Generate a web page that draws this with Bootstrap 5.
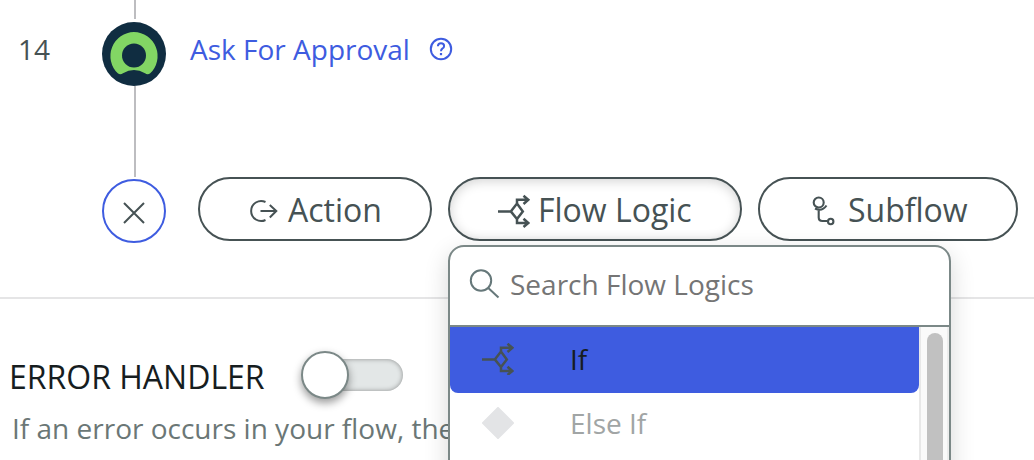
<!DOCTYPE html>
<html lang="en">
<head>
<meta charset="utf-8">
<meta name="viewport" content="width=device-width, initial-scale=1">
<title>Flow Designer</title>
<link href="https://cdn.jsdelivr.net/npm/bootstrap@5.3.0/dist/css/bootstrap.min.css" rel="stylesheet">
<style>
body{font-family:"Open Sans",sans-serif;font-size:28px;line-height:38px;color:#465254;background:#fff}
.designer{width:1034px;height:460px}
.rail{width:64px;margin-left:52px}
.rail i{width:2px;background:#bdbdc0;margin-left:1px}
.line-top{height:19px;margin-bottom:3px}
.line-mid{height:91px}
.cancel{width:64px;height:64px;border:2px solid #3e5ce0;background:#fff;margin-top:2px}
.cancel svg{margin-top:3px}
.step-no{width:50px;padding-left:18px;padding-top:30px}
.main-col{margin-left:24px}
.step-title{margin-top:30px;height:38px;color:#3e5ce0}
.step-title a{color:inherit}
.step-title svg{margin:7px 0 0 19px}
.choices{margin-top:109px;gap:16px;margin-left:8px}
.btn-choice{height:64px;border:2px solid #465254;border-radius:32px;font-size:32px;line-height:44px;color:#465254;padding:2px 0 0 48px;background:#fff;display:flex;align-items:center}
.btn-choice.active{background:#fff!important;color:#465254!important;border-color:#465254!important;box-shadow:inset 0 2px 12px rgba(0,0,0,.18)}
.choice-action{width:234px}
.choice-action svg{margin-top:2px}
.choice-action span{margin-left:10px}
.choice-logic{width:294px;padding-left:47px}
.choice-logic svg{margin-top:1px}
.choice-logic span{margin-left:7px}
.choice-subflow{width:260px;padding-left:52px}
.choice-subflow svg{margin-top:2px}
.choice-subflow span{margin-left:12px}
.flow-top{height:297px}
.handler{border-top:2px solid #e5e5e6;height:163px}
.handler h2{font-size:32px;line-height:44px;font-weight:400;color:#161d1f;margin:6px 0 0}
.handler-head{padding:50px 0 0 9px;height:100px}
.toggle{width:102px;height:32px;margin:10px 0 0 36px}
.toggle-track{width:78px;height:32px;border-radius:16px;background:#e3e7e7;box-shadow:inset 0 0 5px rgba(0,0,0,.38)}
.toggle-knob{left:0;top:-8px;width:48px;height:48px;background:#fff;border:2px solid #7b8887;box-shadow:0 4px 8px rgba(0,0,0,.4)}
.desc{color:#6b7776;padding-left:12px;margin-top:10px}
.picker{left:448px;top:245px;width:503px;height:260px;border:2px solid #7b8887;border-radius:16px;box-shadow:0 8px 24px rgba(0,0,0,.16);z-index:5}
.picker-search{height:80px;border-bottom:2px solid #7b8887;color:#757575;padding:0 0 4px 18px}
.picker-search span{margin-left:10px}
.picker-list{width:469px}
.picker-item{height:66px;padding:0 0 6px 32px;color:#a1a5a5}
.picker-item span{margin-left:56px}
.picker-item.selected{background:#3e5ce0;color:#161d1f;border-radius:0 0 8px 8px;padding-bottom:2px}
.scroller{width:30px;background:#fafafa;border-left:2px solid #e8e8e8;border-right:2px solid #ededed;padding:6px 0 0 6px}
.scroller div{width:16px;height:170px;background:#c1c1c1;border-radius:8px}
svg{display:block;flex:none}
</style>
</head>
<body>
<svg width="0" height="0" class="position-absolute" aria-hidden="true">
  <symbol id="branch" viewBox="0 0 34 34"><g fill="none" stroke="#465254" stroke-width="2.500"><path d="M1 17.400H14M13.800 17.400 20 9.500 25.800 17.400 20 25ZM20 10.500V5.800H31M20 24V29H31M26.500 1.700 31.300 5.800 26.500 10M26.500 24.800 31.300 29 26.500 33"/></g></symbol>
</svg>
<div class="designer position-relative overflow-hidden">
  <div class="flow-top d-flex">
    <div class="step-no">14</div>
    <div class="rail d-flex flex-column align-items-center">
      <i class="line-top"></i>
      <svg width="64" height="64" viewBox="0 0 64 64"><circle cx="32" cy="32" r="32" fill="#102d41"/><path d="M32 10A24 24 0 0 0 15.800 51.300Q18.200 53.300 21 51.300Q32 44.500 43 51.300Q45.800 53.300 48.200 51.300A24 24 0 0 0 32 10Z" fill="#82d664"/><circle cx="32" cy="33.500" r="12" fill="#102d41"/></svg>
      <i class="line-mid"></i>
      <div class="cancel rounded-circle d-flex align-items-center justify-content-center"><svg width="22" height="22" viewBox="0 0 22 22"><path d="M1 1 21 21M21 1 1 21" fill="none" stroke="#465254" stroke-width="2"/></svg></div>
    </div>
    <div class="main-col">
      <div class="step-title d-flex"><a href="#" class="text-decoration-none">Ask For Approval</a>
        <svg width="24" height="24" viewBox="0 0 24 24"><g fill="none" stroke="#3e5ce0" stroke-width="2"><circle cx="12" cy="12" r="10.200"/><path d="M8.900 9.200Q9 6.300 12 6.300Q15.100 6.300 15.100 8.900Q15.100 10.500 13.500 11.500Q12 12.300 12 14.300"/></g><rect x="10.900" y="16" width="2.200" height="2.200" fill="#3e5ce0"/></svg>
      </div>
      <div class="choices d-flex">
        <button class="btn btn-choice choice-action"><svg width="30" height="24" viewBox="0 0 30 24"><path d="M17.500 3A10 10 0 1 0 17.500 21M12.500 12H28M21.800 6 28.300 12 21.800 18.500" fill="none" stroke="#465254" stroke-width="2"/></svg><span>Action</span></button>
        <button class="btn btn-choice active choice-logic"><svg width="34" height="34"><use href="#branch"/></svg><span>Flow Logic</span></button>
        <button class="btn btn-choice choice-subflow"><svg width="24" height="30" viewBox="0 0 24 30"><g fill="none" stroke="#465254" stroke-width="2.100"><circle cx="6.700" cy="6.500" r="5"/><path d="M3 12.500Q10 16 14.500 9.500M6.700 14V21.500Q6.700 25 10.400 25H15.500"/><circle cx="18.700" cy="25.500" r="2.700"/></g></svg><span>Subflow</span></button>
      </div>
    </div>
  </div>
  <section class="handler">
    <div class="handler-head d-flex align-items-start">
      <h2 class="text-nowrap">ERROR HANDLER</h2>
      <div class="toggle position-relative d-flex justify-content-end"><div class="toggle-track"></div><div class="toggle-knob position-absolute rounded-circle"></div></div>
    </div>
    <div class="desc text-nowrap">If an error occurs in your flow, the</div>
  </section>
  <div class="picker position-absolute bg-white overflow-hidden">
    <div class="picker-search d-flex align-items-center">
      <svg width="32" height="32" viewBox="0 0 32 32"><g fill="none" stroke="#66787a" stroke-width="2"><circle cx="13" cy="12.500" r="10.200"/><path d="M20.300 20 30.500 29.500"/></g></svg><span>Search Flow Logics</span>
    </div>
    <div class="d-flex">
      <div class="picker-list">
        <div class="picker-item selected d-flex align-items-center"><svg width="32" height="32" viewBox="1 1 32 32"><use href="#branch" width="34" height="34"/></svg><span>If</span></div>
        <div class="picker-item d-flex align-items-center"><svg width="32" height="32" viewBox="0 0 32 32"><path d="M16 1 31 16 16 31 1 16Z" fill="#e3e4e6" stroke="#e3e4e6" stroke-width="2" stroke-linejoin="round"/></svg><span>Else If</span></div>
      </div>
      <div class="scroller"><div></div></div>
    </div>
  </div>
</div>
<script src="https://cdn.jsdelivr.net/npm/bootstrap@5.3.0/dist/js/bootstrap.bundle.min.js"></script>
</body>
</html>
